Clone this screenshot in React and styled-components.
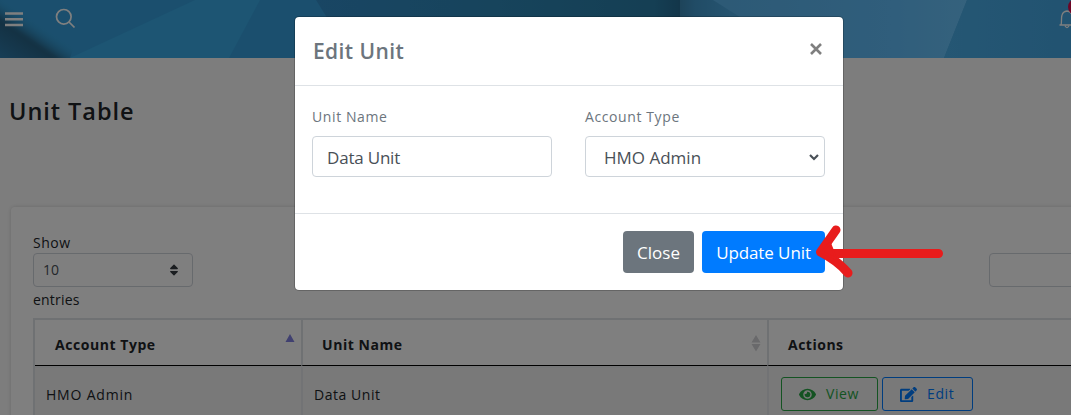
import React from "react";
import styled, { createGlobalStyle } from "styled-components";
import { FaEye, FaEdit, FaSort } from "react-icons/fa";

const Global = createGlobalStyle`
  *, *::before, *::after { box-sizing: border-box; }
  body {
    margin: 0; overflow: hidden; background: #fbfbfb; color: #212529;
    font: 15px/24px "Open Sans", "Noto Sans", sans-serif;
  }
`;

const Text = styled.span`
  display: inline-block;
  white-space: nowrap;
  font-size: ${(p) => p.$size || 14}px;
  letter-spacing: ${(p) => p.$track || 0}px;
  font-weight: ${(p) => p.$weight || 400};
`;

const Page = styled.div`
  position: relative;
  height: 415px;
  overflow: hidden;
`;
const Banner = styled.header`
  position: relative;
  height: 58px;
  display: flex;
  align-items: flex-start;
  padding: 0 5px;
`;
const Facets = styled.svg`
  position: absolute;
  inset: 0;
  width: 1071px;
  height: 58px;
`;
const BannerIcon = styled.svg`
  position: relative;
  flex: none;
  margin-top: ${(p) => p.$top}px;
  margin-left: ${(p) => p.$left}px;
`;
const Bell = styled.div`
  position: relative;
  margin-left: auto;
  margin-right: -12px;
  height: 30px;
`;
const Badge = styled.i`
  position: absolute;
  left: 10px;
  top: -1px;
  width: 16px;
  height: 16px;
  border-radius: 50%;
  background: #dc0a4b;
`;
const PageTitle = styled.h1`
  margin: 37px 0 0 9px;
  height: 32px;
  font-size: 24px;
  line-height: 32px;
`;
const Card = styled.section`
  margin: 80px 0 0 11px;
  width: 1100px;
  height: 300px;
  padding: 24px 0 0 22px;
  background: #fff;
  border-radius: 4px;
  box-shadow: 0 0 4px rgba(0, 0, 0, 0.16);
`;
const Controls = styled.div`
  display: flex;
  justify-content: space-between;
  width: 1060px;
  height: 87px;
`;
const Length = styled.div`
  display: flex;
  flex-direction: column;
`;
const Line = styled.div`
  height: ${(p) => p.$h}px;
  line-height: ${(p) => p.$h}px;
`;
const LengthSelect = styled.div`
  width: 160px;
  height: 34px;
  padding: 0 11px 0 9px;
  display: flex;
  align-items: center;
  justify-content: space-between;
  border: 1px solid #ced4da;
  border-radius: 4px;
  color: #495057;
`;
const SearchBox = styled.div`
  margin-top: 22px;
  width: 104px;
  height: 34px;
  border: 1px solid #ced4da;
  border-radius: 4px;
`;
const Table = styled.div`
  width: 1060px;
  border: 2px solid #dee2e6;
  border-right: 0;
  display: grid;
  grid-template-columns: 266px 466px 1fr;
`;
const Head = styled.div`
  height: 46px;
  display: flex;
  align-items: center;
  justify-content: space-between;
  padding: 4px 6px 0 20px;
  border-bottom: 1px solid #000;
  & + & { border-left: 2px solid #dee2e6; padding-left: 19px; }
`;
const Cell = styled.div`
  height: 60px;
  display: flex;
  gap: 4px;
  padding: 9px 0 0 11px;
  border-top: 2px solid #eceef0;
  background: #f2f2f2;
  & + & { border-left: 2px solid #e4e7ea; }
`;
const CellText = styled.div`
  padding-top: 5px;
`;
const SortMarks = styled.svg`
  flex: none;
  margin-top: -3px;
`;
const RowButton = styled.div`
  width: ${(p) => p.$w}px;
  height: 34px;
  display: flex;
  align-items: center;
  padding-left: 17px;
  gap: 10px;
  border: 1px solid ${(p) => p.$color};
  border-radius: 3px;
  color: ${(p) => p.$color};
  &:first-child { margin-left: 1px; }
`;
const Backdrop = styled.div`
  position: absolute;
  inset: 0;
  background: rgba(0, 0, 0, 0.5);
`;
const Modal = styled.div`
  position: absolute;
  left: 294px;
  top: 16px;
  width: 550px;
  height: 275px;
  background: #fff;
  background-clip: padding-box;
  border: 1px solid rgba(0, 0, 0, 0.2);
  border-radius: 5px;
`;
const ModalHead = styled.div`
  height: 69px;
  display: flex;
  justify-content: space-between;
  padding: 18px 21px 0 18px;
  line-height: 32px;
  color: #6c757d;
  border-bottom: 1px solid #dee2e6;
`;
const CloseMark = styled.svg`
  margin-top: 8px;
`;
const ModalBody = styled.div`
  height: 127px;
  display: flex;
  gap: 33px;
  padding: 17px 17px 0;
`;
const Field = styled.div`
  width: 240px;
  line-height: 26px;
  color: #6c757d;
`;
const Control = styled.div`
  margin-top: 6px;
  height: 41px;
  padding: 2px 5px 0 ${(p) => p.$pad}px;
  display: flex;
  align-items: center;
  justify-content: space-between;
  border: 1px solid #ced4da;
  border-radius: 4px;
  color: #495057;
`;
const ModalFoot = styled.div`
  display: flex;
  justify-content: flex-end;
  gap: 8px;
  padding: 17px 18px 0 0;
  border-top: 1px solid #dee2e6;
`;
const Button = styled.div`
  width: ${(p) => p.$w}px;
  height: 42px;
  padding-top: 1px;
  display: flex;
  align-items: center;
  justify-content: center;
  border-radius: 4px;
  color: #fff;
  background: ${(p) => p.$bg};
`;
const Arrow = styled.svg`
  position: absolute;
  left: 810px;
  top: 220px;
`;

export default function App() {
  return (
    <Page>
      <Global />
      <Banner>
        <Facets viewBox="0 0 1071 58" preserveAspectRatio="none">
          <defs>
            <linearGradient id="corner" gradientUnits="userSpaceOnUse" x1="10" y1="64" x2="38" y2="23">
              <stop offset="0" stopColor="#2f7cac" />
              <stop offset=".58" stopColor="#286488" />
              <stop offset=".64" stopColor="#2a6a90" />
              <stop offset="1" stopColor="#349fd8" stopOpacity="0" />
            </linearGradient>
            <linearGradient id="dark" x1="0" x2="1">
              <stop offset="0" stopColor="#328cc8" />
              <stop offset=".5" stopColor="#2e88b8" />
              <stop offset=".93" stopColor="#2a7ea8" />
              <stop offset="1" stopColor="#266c94" />
            </linearGradient>
            <linearGradient id="right" gradientUnits="userSpaceOnUse" x1="680" y1="0" x2="730" y2="0">
              <stop offset="0" stopColor="#3c88b4" />
              <stop offset=".3" stopColor="#4298cc" />
              <stop offset="1" stopColor="#4ca8e0" />
            </linearGradient>
            <linearGradient id="light" x1="0" x2="1">
              <stop offset="0" stopColor="#5ab4ec" />
              <stop offset=".7" stopColor="#60bcf8" />
              <stop offset="1" stopColor="#6ac4fa" />
            </linearGradient>
            <linearGradient id="far" x1="0" x2="1">
              <stop offset="0" stopColor="#4aaee8" />
              <stop offset="1" stopColor="#44a6e2" />
            </linearGradient>
          </defs>
          <rect width="1071" height="58" fill="#369fdc" />
          <path d="M70 58L195 0H260L229 58Z" fill="#3aaae6" />
          <path d="M0 0H90L70 58H0Z" fill="url(#corner)" />
          <path d="M316 0H680V58H352Z" fill="url(#dark)" />
          <path d="M680 0H1071V58H680Z" fill="url(#right)" />
          <path d="M713 0H967L944 58H805Z" fill="url(#light)" />
          <path d="M967 0H1071V58H944Z" fill="url(#far)" />
        </Facets>
        <BannerIcon $top={11} $left={0} width="18" height="16" stroke="#fff" strokeWidth="2.4">
          <path d="M0 2.5H18M0 8.3H18M0 14H18" />
        </BannerIcon>
        <BannerIcon $top={8} $left={32} width="22" height="22" fill="none" stroke="#fff" strokeWidth="1.7">
          <circle cx="8.8" cy="8.8" r="7.3" /><path d="M14 14L19.5 19.5" />
        </BannerIcon>
        <Bell>
          <BannerIcon $top={9} $left={0} width="20" height="20" fill="none" stroke="#fff" strokeWidth="1.3">
            <path d="M1.5 16H17M3 16C4 13 3 9 4 6Q5 2.5 9 2Q13 2.5 14 6C15 9 14 13 15.5 16M7 17Q9 20 11 17" />
          </BannerIcon>
          <Badge />
        </Bell>
      </Banner>
      <PageTitle><Text $size={23.5} $track={0.95} $weight={600}>Unit Table</Text></PageTitle>
      <Card>
        <Controls>
          <Length>
            <Line $h={22}><Text $track={0.5}>Show</Text></Line>
            <LengthSelect><Text>10</Text><FaSort size={14} color="#343a40" /></LengthSelect>
            <Line $h={24}><Text $track={0.2}>entries</Text></Line>
          </Length>
          <SearchBox />
        </Controls>
        <Table>
          <Head>
            <Text $track={0.55} $weight={700}>Account Type</Text>
            <SortMarks width="10" height="22"><path d="M5 2L9.5 10H.5Z" fill="#8080e0" /></SortMarks>
          </Head>
          <Head>
            <Text $track={0.55} $weight={700}>Unit Name</Text>
            <SortMarks width="10" height="18"><path d="M5 1L9.5 8.5H.5ZM.5 10H9.5L5 17.5Z" fill="#d2d2d6" /></SortMarks>
          </Head>
          <Head><Text $track={0.5} $weight={700}>Actions</Text></Head>
          <Cell><CellText><Text $track={0.8}>HMO Admin</Text></CellText></Cell>
          <Cell><CellText><Text $track={0.55}>Data Unit</Text></CellText></Cell>
          <Cell>
            <RowButton $w={97} $color="#28a745"><FaEye size={17} /><Text $track={0.6}>View</Text></RowButton>
            <RowButton $w={91} $color="#007bff"><FaEdit size={17} /><Text $track={0.6}>Edit</Text></RowButton>
          </Cell>
        </Table>
      </Card>
      <Backdrop />
      <Modal>
        <ModalHead>
          <Text $size={21} $track={0.4} $weight={600}>Edit Unit</Text>
          <CloseMark width="12" height="12" stroke="#7f7f7f" strokeWidth="2.6"><path d="M1 1L11 11M11 1L1 11" /></CloseMark>
        </ModalHead>
        <ModalBody>
          <Field>
            <Text $track={0.6}>Unit Name</Text>
            <Control $pad={14}><Text $size={17} $track={-0.2}>Data Unit</Text></Control>
          </Field>
          <Field>
            <Text $track={0.6}>Account Type</Text>
            <Control $pad={18}>
              <Text $size={17}>HMO Admin</Text>
              <svg width="10" height="8" fill="none" stroke="#495057" strokeWidth="2.2"><path d="M1 1L5 5L9 1" /></svg>
            </Control>
          </Field>
        </ModalBody>
        <ModalFoot>
          <Button $w={71} $bg="#6c757d"><Text $size={17}>Close</Text></Button>
          <Button $w={123} $bg="#007bff"><Text $size={17} $track={-0.1}>Update Unit</Text></Button>
        </ModalFoot>
      </Modal>
      <Arrow width="140" height="65" fill="none" stroke="#e81c1c" strokeWidth="9" strokeLinecap="round" strokeLinejoin="round">
        <path d="M128.5 33.5H14M26 10L10.5 32Q28 41 38 53" />
        <path d="M12 32L20 23L24 33L26 39Z" fill="#e81c1c" strokeWidth="2" />
      </Arrow>
    </Page>
  );
}
